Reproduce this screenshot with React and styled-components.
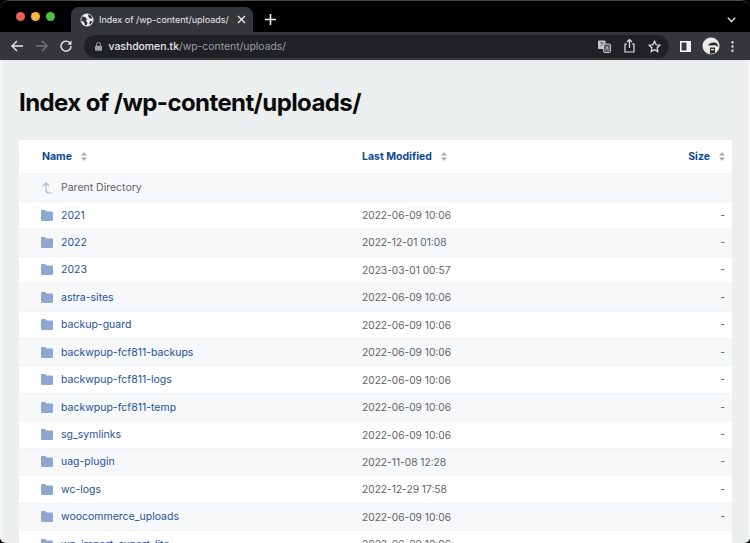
import React from "react";
import styled, { createGlobalStyle } from "styled-components";

const rows = [
  ["2021", "2022-06-09 10:06"],
  ["2022", "2022-12-01 01:08"],
  ["2023", "2023-03-01 00:57"],
  ["astra-sites", "2022-06-09 10:06"],
  ["backup-guard", "2022-06-09 10:06"],
  ["backwpup-fcf811-backups", "2022-06-09 10:06"],
  ["backwpup-fcf811-logs", "2022-06-09 10:06"],
  ["backwpup-fcf811-temp", "2022-06-09 10:06"],
  ["sg_symlinks", "2022-06-09 10:06"],
  ["uag-plugin", "2022-11-08 12:28"],
  ["wc-logs", "2022-12-29 17:58"],
  ["woocommerce_uploads", "2022-06-09 10:06"],
  ["wp_import_export_lite", "2022-06-09 10:06"],
];

const Folder = () => (
  <svg width="12" height="11" viewBox="0 0 12 11">
    <path d="M0 1.2C0 .5.5 0 1.2 0h3l1.3 1.6h5.3c.7 0 1.2.5 1.2 1.2v7c0 .7-.5 1.2-1.2 1.2H1.2C.5 11 0 10.500 0 9.800z" fill="#8fa6d0" />
  </svg>
);

const SortArrows = () => (
  <svg width="6" height="9" viewBox="0 0 6 9">
    <path d="M3 0l3 3.500H0zM3 9L0 5.500h6z" fill="#a9adb3" />
  </svg>
);

const App = () => (
  <Window>
    <GlobalStyle />
    <TabStrip>
      <Lights>
        <Light color="#ed5f57" />
        <Light color="#f4b93a" />
        <Light color="#52c043" />
      </Lights>
      <Tab>
        <TabIcon width="14" height="14" viewBox="0 0 14 14">
          <circle cx="7" cy="7" r="6.500" fill="#e8eaed" />
          <path d="M2 3.500l3 .5 2 2-1 2 1.500 1.500-1 3-1.500-.5-1-3-3-1.500zM8 1.500l3 1 1.500 3-2.500 0-1.500-1.500zM10 8l2.500 0-2 3.500-1.200-.5z" fill="#35363a" />
        </TabIcon>
        <TabTitle>Index of /wp-content/uploads/</TabTitle>
        <TabIcon width="9" height="9" viewBox="0 0 9 9">
          <path d="M1 1l7 7M8 1L1 8" stroke="#e8eaed" strokeWidth="1.300" />
        </TabIcon>
      </Tab>
      <NewTab>
        <svg width="11" height="11" viewBox="0 0 11 11">
          <path d="M5.500 0v11M0 5.500h11" stroke="#f1f3f4" strokeWidth="1.600" />
        </svg>
      </NewTab>
      <TabMenu>
        <svg width="9" height="6" viewBox="0 0 9 6">
          <path d="M.8.8l3.700 3.700L8.200.8" fill="none" stroke="#e8eaed" strokeWidth="1.300" />
        </svg>
      </TabMenu>
    </TabStrip>
    <Toolbar>
      <NavIcon>
        <svg width="12" height="12" viewBox="0 0 12 12">
          <path d="M12 6H1.500M6 1L1 6l5 5" fill="none" stroke="#e8eaed" strokeWidth="1.400" />
        </svg>
      </NavIcon>
      <NavIcon>
        <svg width="12" height="12" viewBox="0 0 12 12">
          <path d="M0 6h10.500M6 1l5 5-5 5" fill="none" stroke="#74777b" strokeWidth="1.400" />
        </svg>
      </NavIcon>
      <NavIcon>
        <svg width="12" height="12" viewBox="0 0 12 12">
          <path d="M10.300 3.600A5 5 0 1 0 11 6" fill="none" stroke="#e8eaed" strokeWidth="1.400" />
          <path d="M11.500.5v4.200H7.300z" fill="#e8eaed" />
        </svg>
      </NavIcon>
      <Omnibox>
        <svg width="7" height="9" viewBox="0 0 7 9">
          <path d="M1.500 4V2.500a2 2 0 0 1 4 0V4" fill="none" stroke="#9aa0a6" />
          <rect y="3.800" width="7" height="5" rx=".8" fill="#9aa0a6" />
        </svg>
        <Url>
          <b>vashdomen.tk</b>/wp-content/uploads/
        </Url>
        <OmniActions>
          <svg width="13" height="13" viewBox="0 0 13 13">
            <rect x="0" y="0.500" width="7.500" height="8.500" rx="1" fill="#c4c7cb" />
            <path d="M2 3h3.500M3.700 2v1M2.500 6.500L5 3.500" fill="none" stroke="#4a4c50" strokeWidth=".8" />
            <rect x="5.500" y="4" width="7" height="8.500" rx="1" fill="#55585c" stroke="#c4c7cb" />
            <path d="M7.500 10.500L9 6.500l1.500 4" fill="none" stroke="#c4c7cb" strokeWidth=".8" />
          </svg>
          <svg width="11" height="14" viewBox="0 0 11 14">
            <path d="M3 5H1v8h9V5H8M5.500 9V1M3 3l2.500-2.500L8 3" fill="none" stroke="#dfe1e5" strokeWidth="1.200" />
          </svg>
          <svg width="13" height="13" viewBox="0 0 24 24">
            <path d="M12 2.500l3 6.300 6.800.9-5 4.700 1.300 6.800-6.100-3.300-6.100 3.300 1.300-6.800-5-4.700 6.800-.9z" fill="none" stroke="#e8eaed" strokeWidth="2.300" />
          </svg>
        </OmniActions>
      </Omnibox>
      <ToolbarEnd>
        <svg width="11" height="11" viewBox="0 0 11 11">
          <rect x=".8" y=".8" width="9.400" height="9.400" fill="none" stroke="#f1f3f4" strokeWidth="1.600" />
          <rect x="6.500" y="1" width="4" height="9" fill="#f1f3f4" />
        </svg>
        <svg width="18" height="18" viewBox="0 0 18 18">
          <circle cx="9" cy="9" r="8.500" fill="#ecebe7" />
          <path d="M6 8.500c1-3 7-4 9.500-1.500l.5 3-2.500-1.800zM8 10.500h5V16l-5 1z" fill="#2f2e2d" />
          <path d="M9 12h3v1.200H9z" fill="#ecebe7" />
        </svg>
        <svg width="3" height="11" viewBox="0 0 3 11">
          <circle cx="1.500" cy="1.300" r="1.200" fill="#dadce0" />
          <circle cx="1.500" cy="5.500" r="1.200" fill="#dadce0" />
          <circle cx="1.500" cy="9.700" r="1.200" fill="#dadce0" />
        </svg>
      </ToolbarEnd>
    </Toolbar>
    <Page>
      <Title>Index of /wp-content/uploads/</Title>
      <Table>
        <HeadRow>
          <NameHead>
            <HeadLink>Name</HeadLink>
            <SortArrows />
          </NameHead>
          <DateCell>
            <HeadLink>Last Modified</HeadLink>
            <SortArrows />
          </DateCell>
          <SizeCell>
            <HeadLink>Size</HeadLink>
            <SortArrows />
          </SizeCell>
        </HeadRow>
        <Row $odd>
          <NameCell>
            <IconBox>
              <svg width="12" height="12" viewBox="0 0 12 12">
                <path d="M11.500 11H7.500C5.500 11 5 9.500 5 8V1.500M2 4l3-3.200L8 4" fill="none" stroke="#a9b8cf" strokeWidth="1.100" />
              </svg>
            </IconBox>
            <ParentLabel>Parent Directory</ParentLabel>
          </NameCell>
        </Row>
        {rows.map(([name, date], i) => (
          <Row key={name} $odd={i % 2 === 1}>
            <NameCell>
              <IconBox>
                <Folder />
              </IconBox>
              <FileLink>{name}</FileLink>
            </NameCell>
            <DateCell>{date}</DateCell>
            <SizeValue>-</SizeValue>
          </Row>
        ))}
      </Table>
    </Page>
  </Window>
);

const GlobalStyle = createGlobalStyle`
  html, body {
    margin: 0;
    background: #000;
    overflow: hidden;
  }
  * {
    box-sizing: border-box;
  }
`;

const Window = styled.div`
  width: 750px;
  height: 543px;
  overflow: hidden;
  display: flex;
  flex-direction: column;
  font-family: Inter, "Liberation Sans", sans-serif;
  border-radius: 0 0 6px 6px;
`;

const TabStrip = styled.div`
  height: 32px;
  flex: none;
  display: flex;
  align-items: flex-end;
  background: #000;
  border-top: 1px solid #4a4a4c;
  border-radius: 9px 9px 0 0;
`;

const Lights = styled.div`
  width: 71px;
  height: 31px;
  padding: 0 0 0 16px;
  display: flex;
  align-items: center;
  gap: 6px;
`;

const Light = styled.span`
  width: 9px;
  height: 9px;
  border-radius: 50%;
  background: ${(p) => p.color};
`;

const Tab = styled.div`
  width: 182px;
  height: 25px;
  padding: 0 7px 0 9px;
  display: flex;
  align-items: center;
  background: #35363a;
  border-radius: 8px 8px 0 0;
`;

const TabIcon = styled.svg`
  flex: none;
`;

const TabTitle = styled.span`
  flex: 1;
  margin-left: 5px;
  font-size: 9px;
  color: #e8eaed;
  white-space: nowrap;
`;

const NewTab = styled.div`
  width: 34px;
  height: 25px;
  display: flex;
  align-items: center;
  justify-content: center;
`;

const TabMenu = styled.div`
  margin-left: auto;
  width: 32px;
  height: 25px;
  padding-right: 6px;
  display: flex;
  align-items: center;
  justify-content: center;
`;

const Toolbar = styled.div`
  height: 28px;
  flex: none;
  display: flex;
  align-items: center;
  padding-left: 5px;
  background: #35363a;
`;

const NavIcon = styled.div`
  width: 24.500px;
  height: 24px;
  display: flex;
  align-items: center;
  justify-content: center;
`;

const Omnibox = styled.div`
  width: 585px;
  height: 23px;
  margin-left: 5px;
  padding: 0 8px 0 11px;
  display: flex;
  align-items: center;
  background: #202124;
  border-radius: 12px;
`;

const Url = styled.span`
  margin-left: 7px;
  font-size: 10.400px;
  color: #9aa0a6;
  white-space: nowrap;
  b {
    font-weight: 500;
    color: #e8eaed;
  }
`;

const OmniActions = styled.div`
  margin-left: auto;
  display: flex;
  align-items: center;
  gap: 13px;
`;

const ToolbarEnd = styled.div`
  flex: 1;
  display: flex;
  align-items: center;
  gap: 11px;
  padding-left: 11px;
`;

const Page = styled.div`
  flex: 1;
  min-height: 0;
  padding: 0 16px 0 17px;
  background: #ecefef;
  border-top: 1px solid #e2e4e6;
  border-left: 2px solid #f4f6f7;
  border-right: 2px solid #f4f6f7;
  overflow: hidden;
`;

const Title = styled.h1`
  margin: 26px 0 0;
  height: 53px;
  font-size: 24px;
  line-height: 32px;
  font-weight: 700;
  color: #0a0a0a;
  letter-spacing: -0.6px;
  white-space: nowrap;
`;

const Table = styled.div`
  background: #fff;
  border-radius: 3px 3px 0 0;
`;

const HeadRow = styled.div`
  height: 33.400px;
  display: grid;
  grid-template-columns: 343px 1fr 80px;
  align-items: center;
  background: #fff;
`;

const Row = styled.div`
  height: 27.450px;
  display: grid;
  grid-template-columns: 343px 1fr 80px;
  align-items: center;
  background: ${(p) => (p.$odd ? "#f6f8f9" : "#fff")};
  border-top: 1px solid #f1f3f5;
  font-size: 10.500px;
`;

const NameCell = styled.div`
  padding-left: 22px;
  display: flex;
  align-items: center;
`;

const NameHead = styled(NameCell)`
  padding-left: 23px;
`;

const DateCell = styled.div`
  display: flex;
  align-items: center;
  color: #5f6368;
  font-size: 10.200px;
`;

const SizeCell = styled.div`
  display: flex;
  align-items: center;
  justify-content: flex-end;
  padding-right: 7px;
`;

const SizeValue = styled.div`
  text-align: right;
  padding-right: 7px;
  color: #5f6368;
`;

const HeadLink = styled.span`
  margin-right: 9px;
  font-size: 10.500px;
  font-weight: 700;
  color: #0d4a94;
`;

const IconBox = styled.span`
  width: 20px;
  display: flex;
  align-items: center;
`;

const ParentLabel = styled.span`
  color: #5f6368;
`;

const FileLink = styled.span`
  color: #1f5199;
`;

export default App;
